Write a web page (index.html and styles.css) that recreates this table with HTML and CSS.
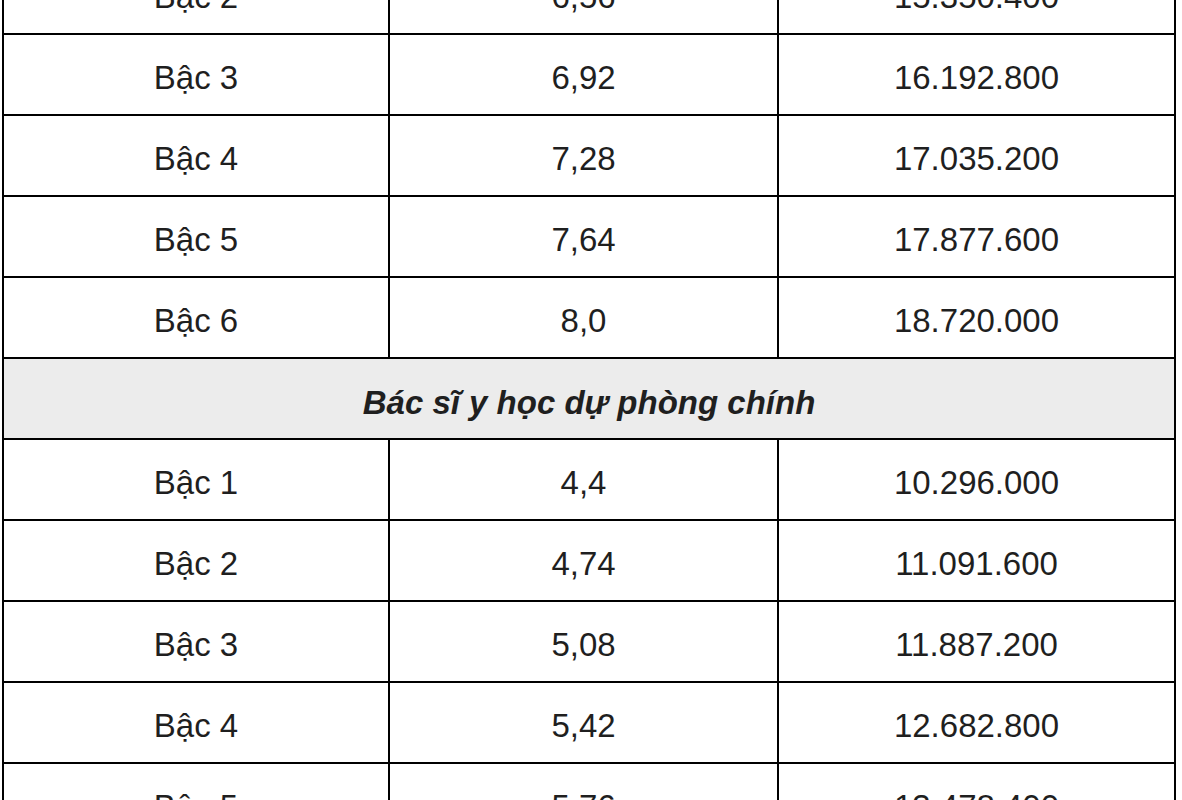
FILE: index.html
```html
<!DOCTYPE html>
<html lang="vi">
<head>
<meta charset="utf-8">
<title>Bảng lương</title>
<link rel="stylesheet" href="styles.css">
</head>
<body>
<table class="salary">
  <tbody>
    <tr><td class="c1">Bậc 2</td><td class="c2">6,56</td><td class="c3">15.350.400</td></tr>
    <tr><td class="c1">Bậc 3</td><td class="c2">6,92</td><td class="c3">16.192.800</td></tr>
    <tr><td class="c1">Bậc 4</td><td class="c2">7,28</td><td class="c3">17.035.200</td></tr>
    <tr><td class="c1">Bậc 5</td><td class="c2">7,64</td><td class="c3">17.877.600</td></tr>
    <tr><td class="c1">Bậc 6</td><td class="c2">8,0</td><td class="c3">18.720.000</td></tr>
    <tr class="group"><td colspan="3">Bác sĩ y học dự phòng chính</td></tr>
    <tr><td class="c1">Bậc 1</td><td class="c2">4,4</td><td class="c3">10.296.000</td></tr>
    <tr><td class="c1">Bậc 2</td><td class="c2">4,74</td><td class="c3">11.091.600</td></tr>
    <tr><td class="c1">Bậc 3</td><td class="c2">5,08</td><td class="c3">11.887.200</td></tr>
    <tr><td class="c1">Bậc 4</td><td class="c2">5,42</td><td class="c3">12.682.800</td></tr>
    <tr><td class="c1">Bậc 5</td><td class="c2">5,76</td><td class="c3">13.478.400</td></tr>
  </tbody>
</table>
</body>
</html>
```
FILE: styles.css
```css
html, body {
  margin: 0;
  padding: 0;
  background: #ffffff;
  overflow: hidden;
}

body {
  font-family: "Liberation Sans", Arial, sans-serif;
  color: #1f1f1f;
}

.salary {
  margin: -48px 0 0 2px;
  border-collapse: separate;
  border-spacing: 0;
  table-layout: fixed;
  width: 1174px;
  border-top: 2px solid #000000;
  border-left: 2px solid #000000;
}

.salary td {
  box-sizing: border-box;
  border-right: 2px solid #000000;
  border-bottom: 2px solid #000000;
  padding: 7px 0 0;
  height: 81px;
  line-height: 72px;
  font-size: 33px;
  text-align: center;
  vertical-align: top;
  white-space: nowrap;
}

.salary .c1 { width: 386px; }
.salary .c2 { width: 389px; }
.salary .c3 { width: 397px; }

.salary .group td {
  background: #ececec;
  font-weight: bold;
  font-style: italic;
  padding: 9px 0 0;
  line-height: 70px;
}
```
